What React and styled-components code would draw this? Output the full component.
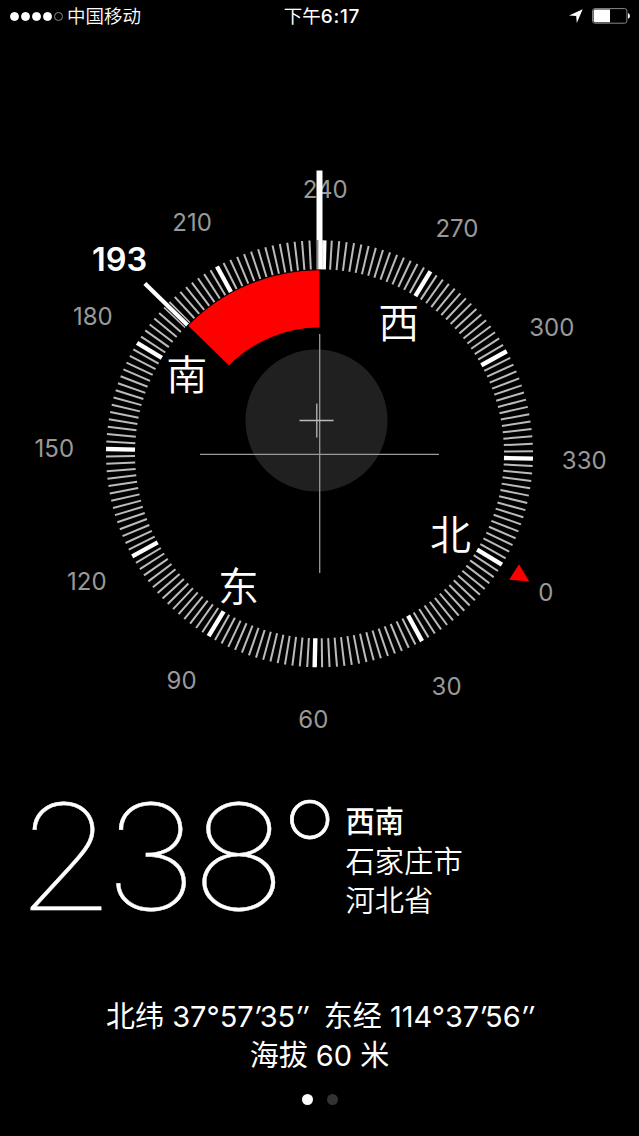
import React from "react";

import styled, { createGlobalStyle } from "styled-components";

const GlobalStyle = createGlobalStyle`
    body {
        margin: 0;
        background: #000;
    }
`;

const Screen = styled.div`
    display: flex;
    flex-direction: column;
    box-sizing: border-box;
    width: 639px;
    height: 1136px;
    overflow: hidden;
    background: #000;
    color: #fff;
    font-family: Inter, "Noto Sans CJK SC", sans-serif;
`;

const StatusBar = styled.header`
    display: grid;
    grid-template-columns: 1fr auto 1fr;
    grid-template-rows: 32px;
    align-items: center;
    height: 32px;
    padding: 0 9px 0 10px;
    font-size: 18.5px;
    line-height: 32px;
`;

const Carrier = styled.div`
    display: flex;
    align-items: center;
    gap: 4px;
    font-weight: 350;
`;

const Signal = styled.div`
    display: flex;
    gap: 2px;
`;

const SignalDot = styled.span`
    box-sizing: border-box;
    width: 9px;
    height: 9px;
    border: 1px solid ${({ $on }) => ($on ? "#fff" : "#8a8a8a")};
    border-radius: 50%;
    background: ${({ $on }) => ($on ? "#fff" : "transparent")};
`;

const Clock = styled.div`
    height: 32px;
    padding-left: 4px;
    font-weight: 500;
    font-size: 19px;
    letter-spacing: 0.7px;

    span {
        font-weight: 400;
        font-size: 18.5px;
        letter-spacing: 0;
    }
`;

const StatusIcons = styled.div`
    display: flex;
    justify-content: flex-end;
    align-items: center;
    gap: 9px;
`;

const Dial = styled.svg`
    display: block;
    flex: none;
    width: 639px;
    height: 738px;

    text {
        text-anchor: middle;
        fill: #fff;
    }
`;

const DegreeLabel = styled.text`
    && {
        fill: #999;
        font-size: 24px;
    }
`;

const CardinalLabel = styled.text`
    font-size: 41px;
    font-weight: 350;
`;

const BearingLabel = styled.text`
    font-size: 32.5px;
    font-weight: 600;
`;

const Reading = styled.section`
    display: flex;
    height: 190px;
    padding: 0 0 0 16px;
`;

const Heading = styled.div`
    display: flex;
    width: 329.5px;
    font-size: 147px;
    font-weight: 100;
    line-height: 174px;
    white-space: nowrap;
    -webkit-text-stroke: 0.4px #fff;
`;

const Digits = styled.div`
    width: 264px;
    letter-spacing: -5.6px;
    transform: scaleX(1.09);
    transform-origin: left;

    span {
        margin-right: -5px;
    }
`;

const DegreeSign = styled.div`
    margin-top: -7px;
    font-size: 131px;
    -webkit-text-stroke: 0.7px #fff;
`;

const Place = styled.div`
    padding-top: 32px;
    font-size: 29.3px;
    font-weight: 350;
    line-height: 39.5px;

    strong {
        display: block;
        font-weight: 550;
    }

    span {
        display: block;
    }
`;

const Coordinates = styled.section`
    padding-top: 37px;
    font-size: 29px;
    line-height: 39px;
    text-align: center;
    white-space: pre;

    p {
        margin: 0;
    }

    i {
        margin-right: -0.6px;
    }
`;

const Pager = styled.nav`
    display: flex;
    justify-content: center;
    gap: 14px;
    padding-top: 19px;
`;

const PageDot = styled.span`
    width: 11px;
    height: 11px;
    border-radius: 50%;
    background: ${({ $active }) => ($active ? "#fff" : "#333")};
`;

// the status bar takes the first 32px, so the dial centre is given below it
const CX = 319.5;
const CY = 421.8;
const HEADING = 238.7;
const BEARING = 193;

const polar = (degree, radius) => {
    const angle = ((degree - HEADING) * Math.PI) / 180;
    return [CX + radius * Math.sin(angle), CY - radius * Math.cos(angle)];
};

const ticks = Array.from({ length: 180 }, (_, i) => i * 2);
const degrees = Array.from({ length: 12 }, (_, i) => i * 30);
const cardinals = [
    { name: "北", degree: 0 },
    { name: "东", degree: 90 },
    { name: "南", degree: 180 },
    { name: "西", degree: 270 }
];

const Tick = ({ degree }) => {
    const major = degree % 30 === 0;
    const [x1, y1] = polar(degree, 184.5);
    const [x2, y2] = polar(degree, 213.5);
    return (
        <line
            x1={x1}
            y1={y1}
            x2={x2}
            y2={y2}
            stroke={major ? "#fff" : "#bbb"}
            strokeWidth={major ? 4.4 : 2}
        />
    );
};

const DeviationArc = () => {
    const [ax, ay] = polar(BEARING, 183.5);
    const [bx, by] = polar(HEADING, 183.5);
    const [cx, cy] = polar(HEADING, 126.3);
    const [dx, dy] = polar(BEARING, 126.3);
    return (
        <path
            d={`M${ax} ${ay}A183.5 183.5 0 0 1 ${bx} ${by}L${cx} ${cy}A126.3 126.3 0 0 0 ${dx} ${dy}Z`}
            fill="#f00"
        />
    );
};

const BearingMarker = () => {
    const [x1, y1] = polar(BEARING, 184.5);
    const [x2, y2] = polar(BEARING, 244);
    return (
        <g>
            <line x1={x1} y1={y1} x2={x2} y2={y2} stroke="#000" strokeWidth="5.6" />
            <line x1={x1} y1={y1} x2={x2} y2={y2} stroke="#fff" strokeWidth="4.2" />
        </g>
    );
};

const HeadingMarker = () => (
    <g>
        <defs>
            <linearGradient id="shade">
                <stop offset="0" stopColor="#444" />
                <stop offset="1" stopColor="#ccc" />
            </linearGradient>
        </defs>
        <rect x="316" y="208" width="2.8" height="29.3" fill="url(#shade)" />
        <rect x="318.5" y="208" width="4" height="29.3" fill="#fff" />
        <path d="M322.8 208V237.3" stroke="#ccc" strokeWidth="0.6" />
        <path d="M319.5 138.5V208" stroke="#fff" strokeWidth="6" />
    </g>
);

const Compass = () => (
    <Dial viewBox="0 0 639 738">
        <circle cx="316.5" cy="388.5" r="71" fill="#202020" />
        <path d="M200 422.3H439M319.7 302V541" stroke="#999" strokeWidth="1.3" />
        <path d="M299.5 388.5H333.5M316.8 371.5V405.5" stroke="#bbb" strokeWidth="1.3" />
        {ticks.map(degree => (
            <Tick key={degree} degree={degree} />
        ))}
        <DeviationArc />
        {degrees.map(degree => {
            const [x, y] = polar(degree, 265);
            return (
                <DegreeLabel key={degree} x={x - 0.2} y={y + 9.2}>
                    {degree}
                </DegreeLabel>
            );
        })}
        {cardinals.map(({ name, degree }) => {
            const [x, y] = polar(degree, 154.3);
            return (
                <CardinalLabel key={name} x={x - 0.9} y={y + 16.3}>
                    {name}
                </CardinalLabel>
            );
        })}
        <path d="M519 532.3L529.3 549.5L509.2 547.8Z" fill="#f00" />
        <BearingMarker />
        <BearingLabel x="119.5" y="239">
            193
        </BearingLabel>
        <HeadingMarker />
    </Dial>
);

const App = () => (
    <Screen>
        <GlobalStyle />
        <StatusBar>
            <Carrier>
                <Signal>
                    {[1, 2, 3, 4, 5].map(bar => (
                        <SignalDot key={bar} $on={bar < 5} />
                    ))}
                </Signal>
                中国移动
            </Carrier>
            <Clock>
                <span>下午</span>6:17
            </Clock>
            <StatusIcons>
                <svg width="14" height="14" viewBox="0 0 14 14">
                    <path d="M13.7 0.3L0 6.5L7.2 6.9L7.8 14Z" fill="#fff" />
                </svg>
                <svg width="38" height="16" viewBox="0 0 38 16">
                    <rect x="0.6" y="0.6" width="34.3" height="14.6" rx="2.2" fill="none" stroke="#888" />
                    <path d="M3 1.6H18V14.2H3Q1.6 14.2 1.6 12.8V3Q1.6 1.6 3 1.6Z" fill="#fff" />
                    <path d="M36 5Q38 6 38 7.9Q38 9.8 36 10.8Z" fill="#fff" />
                </svg>
            </StatusIcons>
        </StatusBar>
        <Compass />
        <Reading>
            <Heading>
                <Digits>
                    <span>2</span>38
                </Digits>
                <DegreeSign>°</DegreeSign>
            </Heading>
            <Place>
                <strong>西南</strong>
                <span>石家庄市</span>
                <span>河北省</span>
            </Place>
        </Reading>
        <Coordinates>
            <p>
                北纬 37°57<i>′</i>35<i>″</i>  东经 114°37<i>′</i>56<i>″</i>
            </p>
            <p>海拔 60 米</p>
        </Coordinates>
        <Pager>
            <PageDot $active />
            <PageDot />
        </Pager>
    </Screen>
);

export default App;
